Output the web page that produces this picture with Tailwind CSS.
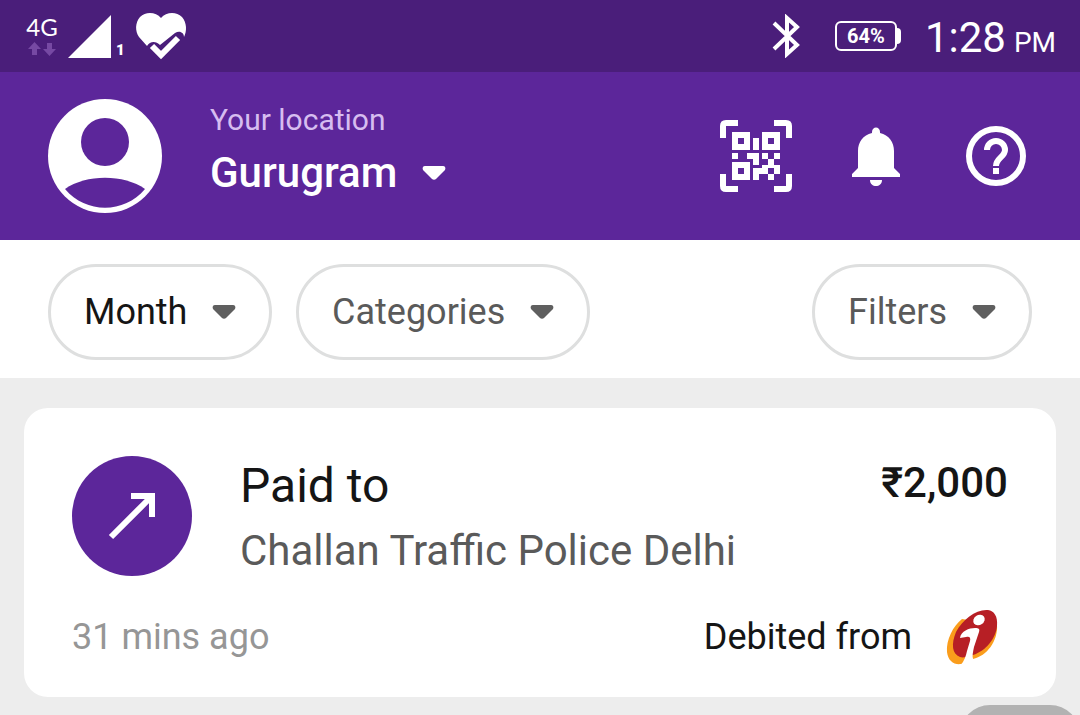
<!DOCTYPE html>
<html lang="en">
<head>
    <meta charset="UTF-8">
    <meta name="viewport" content="width=device-width, initial-scale=1.0">
    <title>Transaction History</title>
    <script src="https://cdn.jsdelivr.net/npm/@tailwindcss/browser@4"></script>
</head>
<body class="relative h-screen overflow-hidden bg-[#ededed] font-['Roboto',sans-serif]">
    <!-- Status bar -->
    <div class="flex h-[72px] items-center justify-between bg-[#4a1e7a] pl-[26px] pr-6 text-white">
        <div class="flex items-center">
            <div class="flex w-8 flex-col items-center">
                <span class="font-['Lato',sans-serif] text-2xl leading-6">4G</span>
                <svg class="mt-0.5 h-4 w-7" viewBox="0 0 28 16" fill="#7649a3" aria-hidden="true">
                    <path d="M6.500 1 13 8H9v6H4V8H0zM21.500 15 15 8h4V2h5v6h4z"/>
                </svg>
            </div>
            <svg class="ml-2.5 h-[46px] w-11" viewBox="0 0 44 46" fill="#fff" aria-hidden="true">
                <path d="M43 2v43H0z"/>
            </svg>
            <span class="ml-1 mt-7 text-[15px] font-black leading-4">1</span>
            <svg class="ml-2.5 h-[50px] w-[52px]" viewBox="0 0 52 50" aria-hidden="true">
                <path fill="#fff" d="M26 7C21 1 11 0 5 6 0 12 0 20 4 26l8 9c3-5 9-5 13-1l15-12c5-3 9 0 9 4 3-6 3-14-2-20-6-6-16-5-21 1z"/>
                <path fill="none" stroke="#fff" stroke-width="6" d="m17 35 9 9 17-17"/>
            </svg>
        </div>
        <div class="flex items-center">
            <svg class="h-11 w-7" viewBox="0 0 28 44" fill="none" stroke="#fff" stroke-width="4" aria-hidden="true">
                <path d="m2 9 23 22-10 9V4l10 9L2 35"/>
            </svg>
            <div class="ml-[35px] flex items-center">
                <span class="flex h-[30px] w-[62px] items-center justify-center rounded-md border-2 border-white text-xl font-bold leading-6">64%</span>
                <span class="h-4 w-1 rounded-r-sm bg-white"></span>
            </div>
            <div class="ml-6 flex items-baseline gap-2 pt-2 text-[42px] leading-[48px]">
                <span>1:28</span>
                <span class="text-[28px]">PM</span>
            </div>
        </div>
    </div>

    <!-- App bar -->
    <header class="flex h-[168px] items-center bg-[#5c269a] pl-12 pr-[54px] text-white">
        <button type="button" aria-label="Profile" class="size-[114px]">
            <svg viewBox="0 0 114 114" aria-hidden="true">
                <circle cx="57" cy="57" r="57" fill="#fff"/>
                <circle cx="57" cy="43" r="24" fill="#5c269a"/>
                <path fill="#5c269a" d="M17 90C38 75 76 75 97 90 76 115 38 115 17 90z"/>
            </svg>
        </button>
        <div class="ml-12 flex flex-col">
            <label for="location" class="text-[30px] leading-9 text-[#d6bdf0]">Your location</label>
            <div class="mt-2.5 flex items-center gap-6 pb-3">
                <select id="location" class="appearance-none bg-transparent text-[42px] font-medium leading-[50px]">
                    <option>Gurugram</option>
                </select>
                <svg class="h-4 w-6" viewBox="0 0 24 16" fill="#fff" aria-hidden="true">
                    <path d="M3 1h18c2 0 3 2 2 4l-9 9c-1 1-3 1-4 0L1 5C0 3 1 1 3 1z"/>
                </svg>
            </div>
        </div>
        <div class="ml-auto flex items-center">
            <button type="button" aria-label="Scan QR code" class="size-[72px]">
                <svg viewBox="0 0 24 24" fill="#fff" aria-hidden="true">
                    <path d="M0 6V2q0-2 2-2h4v2H2v4zM18 0h4q2 0 2 2v4h-2V2h-4zM24 18v4q0 2-2 2h-4v-2h4v-4zM6 24H2q-2 0-2-2v-4h2v4h4z"/>
                    <path fill-rule="evenodd" d="M4 4h6v6H4zm2 2v2h2V6zM14 4h6v6h-6zm2 2v2h2V6zM4 14h6v6H4zm2 2v2h2v-2z"/>
                    <path d="M11 6h2v4h-2zM4 11h2v2H4zM9 11h4v4h-2v-2H9zM14 11h2v2h-2zM18 11h2v2h-2zM16 13h2v2h2v3h-2v-2h-2v2h-3v2h-2v-4h3v-1h2zM16 18h2v2h-2z"/>
                </svg>
            </button>
            <button type="button" aria-label="Notifications" class="ml-[60px] h-[60px] w-12">
                <svg viewBox="0 0 48 60" fill="#fff" aria-hidden="true">
                    <path d="M20 6c0-6 8-6 8 0v1c9 2 14 9 14 18v17l6 6v3H0v-3l6-6V25C6 16 11 9 20 7zM18 54h12c0 8-12 8-12 0z"/>
                </svg>
            </button>
            <button type="button" aria-label="Help" class="ml-[66px] size-[60px]">
                <svg viewBox="0 0 60 60" aria-hidden="true">
                    <circle cx="30" cy="30" r="27" fill="none" stroke="#fff" stroke-width="6"/>
                    <path fill="none" stroke="#fff" stroke-width="6" d="M21 24a9 9 0 0 1 18 0c0 7-9 8-9 16"/>
                    <path fill="#fff" d="M27 42h6v6h-6z"/>
                </svg>
            </button>
        </div>
    </header>

    <!-- Filter chips -->
    <div class="flex items-center gap-6 bg-white px-12 pb-[18px] pt-6 text-4xl text-[#5a5a5a]">
        <label class="flex h-24 items-center gap-6 rounded-full border-3 border-[#dedfdf] px-[33px]">
            <select aria-label="Month" class="appearance-none bg-transparent leading-[42px] text-[#151515]">
                <option>Month</option>
            </select>
            <svg class="h-4 w-6" viewBox="0 0 24 16" fill="#5f5f5f" aria-hidden="true">
                <path d="M3 1h18c2 0 3 2 2 4l-9 9c-1 1-3 1-4 0L1 5C0 3 1 1 3 1z"/>
            </svg>
        </label>
        <label class="flex h-24 items-center gap-6 rounded-full border-3 border-[#dedfdf] px-[33px]">
            <select aria-label="Categories" class="appearance-none bg-transparent leading-[42px]">
                <option>Categories</option>
            </select>
            <svg class="h-4 w-6" viewBox="0 0 24 16" fill="#5f5f5f" aria-hidden="true">
                <path d="M3 1h18c2 0 3 2 2 4l-9 9c-1 1-3 1-4 0L1 5C0 3 1 1 3 1z"/>
            </svg>
        </label>
        <label class="ml-auto flex h-24 items-center gap-6 rounded-full border-3 border-[#dedfdf] px-[33px]">
            <select aria-label="Filters" class="appearance-none bg-transparent leading-[42px]">
                <option>Filters</option>
            </select>
            <svg class="h-4 w-6" viewBox="0 0 24 16" fill="#5f5f5f" aria-hidden="true">
                <path d="M3 1h18c2 0 3 2 2 4l-9 9c-1 1-3 1-4 0L1 5C0 3 1 1 3 1z"/>
            </svg>
        </label>
    </div>

    <!-- Transactions -->
    <main class="px-6 pt-[30px]">
        <article class="rounded-3xl bg-white px-12 pb-[30px] pt-12 text-[#151515]">
            <div class="flex items-start">
                <svg class="size-[120px] shrink-0" viewBox="0 0 120 120" aria-hidden="true">
                    <circle cx="60" cy="60" r="60" fill="#5c269a"/>
                    <path fill="none" stroke="#fff" stroke-width="6" d="m39 81 40-40M59 40h21v21"/>
                </svg>
                <div class="ml-12 grow">
                    <h2 class="text-5xl leading-[60px]">Paid to</h2>
                    <p class="mt-2 text-[42px] leading-[54px] text-[#5a5a5a]">Challan Traffic Police Delhi</p>
                </div>
                <p class="text-[42px] font-medium leading-[54px]">₹2,000</p>
            </div>
            <div class="mt-[29px] flex items-center text-4xl">
                <time class="text-[#969696]">31 mins ago</time>
                <span class="ml-auto">Debited from</span>
                <svg class="ml-6 size-[72px] -my-1.5" viewBox="0 0 72 72" role="img" aria-label="ICICI Bank">
                    <path fill="#fa9d1c" d="M26 18C17 25 10 39 11 51c1 9 7 13 14 12 4-1 6-5 7-10l5 5c14-3 25-18 24-34z"/>
                    <path fill="#b71f25" d="M52 9C40 8 27 18 20 31c-5 12-4 22 4 25 3 1 6 0 9-1l4-1c13-4 23-17 24-29 1-10-3-15-9-16z"/>
                    <path fill="#fff" d="M24 37c1-7 9-10 15-10 4 0 5 1 4 4l-5 15c-1 5-2 9-1 12l-3 6H25c3-4 5-9 6-14l3-10c1-4-1-5-4-4z"/>
                    <ellipse cx="43" cy="19" rx="6" ry="5" fill="#fff" transform="rotate(-35 43 19)"/>
                </svg>
            </div>
        </article>
    </main>

    <!-- Floating button peeking in from below -->
    <button type="button" aria-label="Scroll to top" class="absolute bottom-0 right-0 h-2.5 w-[120px] overflow-hidden">
        <span class="block h-[72px] rounded-[30px] bg-[#b2b2b2]"></span>
    </button>
</body>
</html>
